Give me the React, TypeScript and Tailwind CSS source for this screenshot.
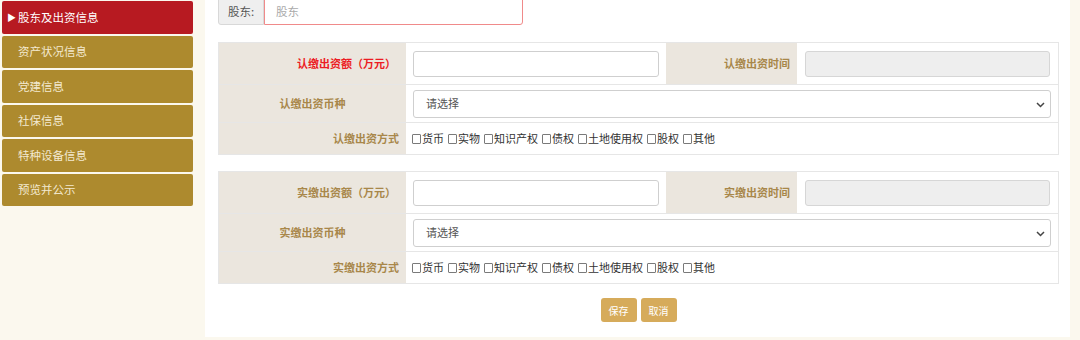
import React from "react";

const menu = ["股东及出资信息", "资产状况信息", "党建信息", "社保信息", "特种设备信息", "预览并公示"];
const methods = ["货币", "实物", "知识产权", "债权", "土地使用权", "股权", "其他"];

function Box() {
  return <span className="inline-block w-[9px] h-[10px] border border-[#7a7a7a] rounded-[1px] mr-[1px] bg-white" />;
}

function Chevron() {
  return (
    <svg width="9" height="6" viewBox="0 0 9 6" className="absolute right-[5px] top-[11px]">
      <path d="M1 1 L4.5 4.5 L8 1" fill="none" stroke="#444" strokeWidth="1.5" />
    </svg>
  );
}

function Section({ prefix, red }: { prefix: string; red?: boolean }) {
  return (
    <div className="border border-[#e6e6e6] bg-white">
      <div className="grid grid-cols-[187px_260px_131px_1fr] h-[42px] border-b border-[#e6e6e6]">
        <div className={`bg-[#ebe6de] flex items-center justify-end pr-[10px] font-bold ${red ? "text-[#ec1c24]" : "text-[#a8874a]"}`}>
          {prefix}缴出资额（万元）
        </div>
        <div className="flex items-center px-[7px]">
          <div className="w-full h-[26px] border border-[#cfcfcf] rounded-[3px] bg-white" />
        </div>
        <div className="bg-[#ebe6de] flex items-center justify-end pr-[7px] font-bold text-[#a8874a]">{prefix}缴出资时间</div>
        <div className="flex items-center px-[8px]">
          <div className="w-full h-[26px] border border-[#d6d6d6] rounded-[3px] bg-[#eeeeee]" />
        </div>
      </div>
      <div className="grid grid-cols-[187px_1fr] h-[38px] border-b border-[#e6e6e6]">
        <div className="bg-[#ebe6de] flex items-center justify-center font-bold text-[#a8874a]">{prefix}缴出资币种</div>
        <div className="flex items-center px-[7px]">
          <div className="relative w-full h-[28px] border border-[#cfcfcf] rounded-[3px] bg-white flex items-center pl-[12px] text-[#555]">
            请选择
            <Chevron />
          </div>
        </div>
      </div>
      <div className="grid grid-cols-[187px_1fr] h-[31px]">
        <div className="bg-[#ebe6de] flex items-center justify-end pr-[7px] font-bold text-[#a8874a]">{prefix}缴出资方式</div>
        <div className="flex items-center pl-[6px] text-[#333]">
          {methods.map((m) => (
            <span key={m} className="flex items-center mr-[4px]">
              <Box />
              {m}
            </span>
          ))}
        </div>
      </div>
    </div>
  );
}

export default function App() {
  return (
    <div
      className="w-[1080px] h-[340px] overflow-hidden bg-[#fbf8ee] flex text-[11px]"
      style={{ fontFamily: '"Noto Sans CJK SC", "Noto Sans", sans-serif' }}
    >
      <div className="w-[205px] shrink-0 pl-[2px] pt-[1px] flex flex-col gap-[2px]">
        {menu.map((m, i) => (
          <div
            key={m}
            className={`w-[191px] h-[32.5px] rounded-[2px] flex items-center text-[11.5px] ${
              i === 0 ? "bg-[#b71a21] text-white pl-[5px]" : "bg-[#ad8a2e] text-[#f3e9d0] pl-[16px]"
            }`}
          >
            {i === 0 && <span className="text-[9px] mr-[2px]">▶</span>}
            {m}
          </div>
        ))}
      </div>
      <div className="w-[865px] shrink-0 bg-white pl-[13px] pr-[11px] h-[337px]">
        <div className="flex mt-[-9px] h-[34px]">
          <div className="w-[46px] border border-[#d8d8d8] bg-[#efefef] rounded-l-[3px] flex items-center justify-center pt-[8px] text-[#555] text-[11.5px]">
            股东:
          </div>
          <div className="w-[259px] border border-[#f08a8a] rounded-r-[3px] flex items-center pl-[11px] pt-[8px] text-[#aaa] text-[11.5px]">
            股东
          </div>
        </div>
        <div className="mt-[17px]">
          <Section prefix="认" red />
        </div>
        <div className="mt-[16px]">
          <Section prefix="实" />
        </div>
        <div className="flex justify-center gap-[4px] mt-[14px]">
          <div className="w-[36px] h-[24px] bg-[#d6ab5b] rounded-[3px] text-white text-[10px] flex items-center justify-center">保存</div>
          <div className="w-[36px] h-[24px] bg-[#d6ab5b] rounded-[3px] text-white text-[10px] flex items-center justify-center">取消</div>
        </div>
      </div>
    </div>
  );
}
